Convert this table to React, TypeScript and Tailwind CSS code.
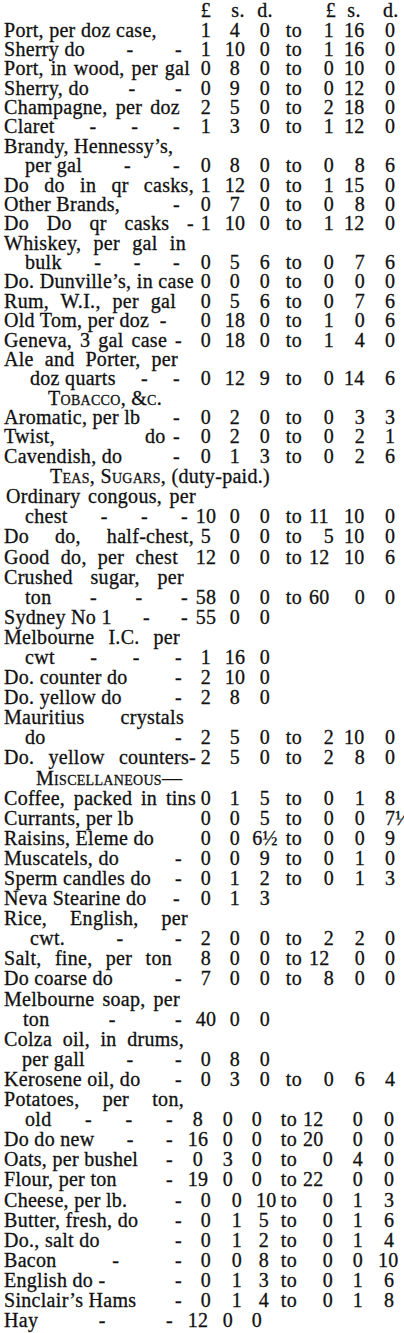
import React from 'react';

type Profile = 'a' | 'c' | 'd';

interface Row {
  t?: string; // label text
  h?: React.ReactNode; // section heading
  hc?: string; // heading classes
  box?: string; // label box classes
  j?: boolean; // justify the words of the label
  d?: number; // dash leaders after the label
  v?: string[]; // £ s. d. [to £ s. d.]
  p?: Profile;
}

const grids: Record<Profile, string> = {
  a: 'grid-cols-[194px_24px_34px_26px_26px_40px_32px_28px]',
  c: 'grid-cols-[186px_24px_36px_22px_32px_40px_36px_28px]',
  d: 'grid-cols-[194px_24px_38px_16px_28px_40px_36px_28px]',
};

const sc = '[font-variant-caps:small-caps]';

const rows: Row[] = [
  { t: 'Port, per doz case,', box: 'ml-[4px]', v: ['1', '4', '0', '1', '16', '0'] },
  { t: 'Sherry do', box: 'ml-[4px] w-[178px]', d: 2, v: ['1', '10', '0', '1', '16', '0'] },
  { t: 'Port, in wood, per gal', box: 'ml-[4px] w-[186px]', j: true, v: ['0', '8', '0', '0', '10', '0'] },
  { t: 'Sherry, do', box: 'ml-[4px] w-[178px]', d: 2, v: ['0', '9', '0', '0', '12', '0'] },
  { t: 'Champagne, per doz', box: 'ml-[4px] w-[176px]', j: true, v: ['2', '5', '0', '2', '18', '0'] },
  { t: 'Claret', box: 'ml-[4px] w-[176px]', d: 3, v: ['1', '3', '0', '1', '12', '0'] },
  { t: 'Brandy, Hennessy\u2019s,', box: 'ml-[4px]', v: [] },
  { t: 'per gal', box: 'ml-[25px] w-[155px]', d: 2, v: ['0', '8', '0', '0', '8', '6'] },
  { t: 'Do do in qr casks,', box: 'ml-[4px] w-[190px]', j: true, v: ['1', '12', '0', '1', '15', '0'] },
  { t: 'Other Brands,', box: 'ml-[4px] w-[176px]', d: 1, v: ['0', '7', '0', '0', '8', '0'] },
  { t: 'Do Do qr casks -', box: 'ml-[4px] w-[190px]', j: true, v: ['1', '10', '0', '1', '12', '0'] },
  { t: 'Whiskey, per gal in', box: 'ml-[4px] w-[182px]', j: true },
  { t: 'bulk', box: 'ml-[25px] w-[155px]', d: 3, v: ['0', '5', '6', '0', '7', '6'] },
  { t: 'Do. Dunville\u2019s, in case', box: 'ml-[4px] w-[190px]', j: true, v: ['0', '0', '0', '0', '0', '0'] },
  { t: 'Rum, W.I., per gal', box: 'ml-[4px] w-[172px]', j: true, v: ['0', '5', '6', '0', '7', '6'] },
  { t: 'Old Tom, per doz  -', box: 'ml-[4px] whitespace-pre', v: ['0', '18', '0', '1', '0', '6'] },
  { t: 'Geneva, 3 gal case -', box: 'ml-[4px] w-[178px]', j: true, v: ['0', '18', '0', '1', '4', '0'] },
  { t: 'Ale and Porter, per', box: 'ml-[4px] w-[174px]', j: true },
  { t: 'doz quarts', box: 'ml-[30px] w-[150px]', d: 2, v: ['0', '12', '9', '0', '14', '6'] },
  { h: <span className={sc}>Tobacco, &amp;c.</span>, hc: 'pl-[48px]' },
  { t: 'Aromatic, per lb', box: 'ml-[4px] w-[176px]', d: 1, v: ['0', '2', '0', '0', '3', '3'] },
  { t: 'Twist,                 do', box: 'ml-[4px] w-[176px]', d: 1, v: ['0', '2', '0', '0', '2', '1'] },
  { t: 'Cavendish, do', box: 'ml-[4px] w-[176px]', d: 1, v: ['0', '1', '3', '0', '2', '6'] },
  {
    h: (
      <>
        <span className={sc}>Teas, Sugars,</span> (duty-paid.)
      </>
    ),
    hc: 'pl-[50px]',
  },
  { t: 'Ordinary congous, per', box: 'ml-[6px] w-[190px]', j: true },
  { t: 'chest', box: 'ml-[25px] w-[163px]', d: 3, v: ['10', '0', '0', '11', '10', '0'] },
  { t: 'Do do, half-chest,', box: 'ml-[4px] w-[190px]', j: true, v: ['5', '0', '0', '5', '10', '0'] },
  { t: 'Good do, per chest', box: 'ml-[4px] w-[174px]', j: true, v: ['12', '0', '0', '12', '10', '6'] },
  { t: 'Crushed sugar, per', box: 'ml-[4px] w-[180px]', j: true },
  { t: 'ton', box: 'ml-[25px] w-[163px]', d: 3, v: ['58', '0', '0', '60', '0', '0'] },
  { t: 'Sydney No 1', box: 'ml-[4px] w-[184px]', d: 2, v: ['55', '0', '0'] },
  { t: 'Melbourne I.C. per', box: 'ml-[4px] w-[176px]', j: true },
  { t: 'cwt', box: 'ml-[25px] w-[157px]', d: 3, v: ['1', '16', '0'] },
  { t: 'Do. counter do', box: 'ml-[4px] w-[178px]', d: 1, v: ['2', '10', '0'] },
  { t: 'Do. yellow do', box: 'ml-[4px] w-[178px]', d: 1, v: ['2', '8', '0'] },
  { t: 'Mauritius crystals', box: 'ml-[4px] w-[180px]', j: true },
  { t: 'do', box: 'ml-[25px] w-[157px]', d: 1, v: ['2', '5', '0', '2', '10', '0'] },
  { t: 'Do. yellow counters-', box: 'ml-[4px] w-[192px]', j: true, v: ['2', '5', '0', '2', '8', '0'] },
  { h: <span className={sc}>Miscellaneous&mdash;</span>, hc: 'pl-[36px]' },
  { t: 'Coffee, packed in tins', box: 'ml-[4px] w-[192px]', j: true, v: ['0', '1', '5', '0', '1', '8'] },
  { t: 'Currants, per lb', box: 'ml-[4px]', v: ['0', '0', '5', '0', '0', '7\u00bd'] },
  { t: 'Raisins, Eleme do', box: 'ml-[4px]', v: ['0', '0', '6\u00bd', '0', '0', '9'] },
  { t: 'Muscatels, do', box: 'ml-[4px] w-[178px]', d: 1, v: ['0', '0', '9', '0', '1', '0'] },
  { t: 'Sperm candles do', box: 'ml-[4px] w-[178px]', d: 1, v: ['0', '1', '2', '0', '1', '3'] },
  { t: 'Neva Stearine do', box: 'ml-[4px] w-[176px]', d: 1, v: ['0', '1', '3'] },
  { t: 'Rice, English, per', box: 'ml-[4px] w-[184px]', j: true },
  { t: 'cwt.', box: 'ml-[30px] w-[152px]', d: 2, v: ['2', '0', '0', '2', '2', '0'] },
  { t: 'Salt, fine, per ton', box: 'ml-[4px] w-[168px]', j: true, v: ['8', '0', '0', '12', '0', '0'] },
  { t: 'Do coarse do', box: 'ml-[4px] w-[178px]', d: 1, v: ['7', '0', '0', '8', '0', '0'] },
  { t: 'Melbourne soap, per', box: 'ml-[4px] w-[176px]', j: true },
  { t: 'ton', box: 'ml-[23px] w-[159px]', d: 2, v: ['40', '0', '0'] },
  { t: 'Colza oil, in drums,', box: 'ml-[4px] w-[180px]', j: true },
  { t: 'per gall', box: 'ml-[22px] w-[160px]', d: 2, v: ['0', '8', '0'] },
  { t: 'Kerosene oil, do', box: 'ml-[4px] w-[178px]', d: 1, v: ['0', '3', '0', '0', '6', '4'] },
  { t: 'Potatoes, per ton,', box: 'ml-[4px] w-[180px]', j: true },
  { t: 'old', box: 'ml-[25px] w-[148px]', d: 3, v: ['8', '0', '0', '12', '0', '0'], p: 'c' },
  { t: 'Do do new', box: 'ml-[4px] w-[169px]', d: 2, v: ['16', '0', '0', '20', '0', '0'], p: 'c' },
  { t: 'Oats, per bushel', box: 'ml-[4px] w-[169px]', d: 1, v: ['0', '3', '0', '0', '4', '0'], p: 'c' },
  { t: 'Flour, per ton', box: 'ml-[4px] w-[169px]', d: 1, v: ['19', '0', '0', '22', '0', '0'], p: 'c' },
  { t: 'Cheese, per lb.', box: 'ml-[4px] w-[178px]', d: 1, v: ['0', '0', '10', '0', '1', '3'], p: 'd' },
  { t: 'Butter, fresh, do', box: 'ml-[4px] w-[178px]', d: 1, v: ['0', '1', '5', '0', '1', '6'], p: 'd' },
  { t: 'Do., salt do', box: 'ml-[4px] w-[178px]', d: 1, v: ['0', '1', '2', '0', '1', '4'], p: 'd' },
  { t: 'Bacon', box: 'ml-[4px] w-[178px]', d: 2, v: ['0', '0', '8', '0', '0', '10'], p: 'd' },
  { t: 'English do -', box: 'ml-[4px] w-[178px]', d: 1, v: ['0', '1', '3', '0', '1', '6'], p: 'd' },
  { t: 'Sinclair\u2019s Hams', box: 'ml-[4px] w-[178px]', d: 1, v: ['0', '1', '4', '0', '1', '8'], p: 'd' },
  { t: 'Hay', box: 'ml-[4px] w-[169px]', d: 2, v: ['12', '0', '0'], p: 'c' },
];

function cellClasses(p: Profile, v: string[]): string[] {
  const two = (s?: string) => !!s && s.length > 1 && !s.includes('\u00bd');
  const d2 = v[5] === '10' ? 'text-left pl-[2px]' : p === 'a' ? 'text-left pl-[9px]' : 'text-left pl-[8px]';
  if (p === 'a') {
    return [
      'text-center',
      'text-center',
      'text-center',
      'text-right pr-[2px]',
      two(v[3]) ? 'text-left pl-[5px]' : 'text-right pr-[10px]',
      two(v[4]) ? 'text-center pr-[12px]' : 'text-center',
      d2,
    ];
  }
  return [
    'text-center',
    'text-center',
    'text-center',
    'text-right pr-[3px]',
    two(v[3]) ? 'text-left pl-[3px]' : 'text-right pr-[7px]',
    two(v[4]) ? 'text-center pr-[10px]' : 'text-center',
    d2,
  ];
}

function Label({ row }: { row: Row }) {
  if (row.d) {
    return (
      <div className={`${row.box} [text-align-last:justify]`}>
        <span className="inline-block whitespace-pre">{row.t}</span>
        {' -'.repeat(row.d)}
      </div>
    );
  }
  if (row.j) {
    return <div className={`${row.box} [text-align-last:justify]`}>{row.t}</div>;
  }
  return <div className={`${row.box} whitespace-pre`}>{row.t}</div>;
}

function PriceRow({ row, tall }: { row: Row; tall: boolean }) {
  const h = tall ? 'h-[20.1px] leading-[20.1px]' : 'h-[19.38px] leading-[19.38px]';
  if (row.h) {
    return <div className={`${h} ${row.hc} whitespace-nowrap`}>{row.h}</div>;
  }
  const p = row.p ?? 'a';
  const v = row.v ?? [];
  const cls = cellClasses(p, v);
  const cells = v.length ? [v[0], v[1], v[2], ...(v.length > 3 ? ['to', v[3], v[4], v[5]] : [])] : [];
  return (
    <div className={`grid ${grids[p]} ${h}`}>
      <div className="whitespace-nowrap">
        <Label row={row} />
      </div>
      {cells.map((c, i) => (
        <div key={i} className={`whitespace-nowrap ${cls[i]}`}>
          {c}
        </div>
      ))}
    </div>
  );
}

export default function App() {
  return (
    <div className="w-[404px] h-[1333px] overflow-hidden bg-white text-[#111111] font-['Liberation_Serif',serif] text-[20px] tracking-[0.3px] [-webkit-text-stroke:0.3px_#111111]">
      <div className={`grid ${grids.a} h-[20.5px] leading-[20.5px]`}>
        <div />
        <div className="text-center">&pound;</div>
        <div className="text-center pl-[6px]">s.</div>
        <div className="text-center">d.</div>
        <div />
        <div className="text-right pr-[8px]">&pound;</div>
        <div className="text-center pr-[12px]">s.</div>
        <div className="text-left pl-[7px]">d.</div>
      </div>
      {rows.map((r, i) => (
        <PriceRow key={i} row={r} tall={i + 1 >= 24} />
      ))}
    </div>
  );
}
